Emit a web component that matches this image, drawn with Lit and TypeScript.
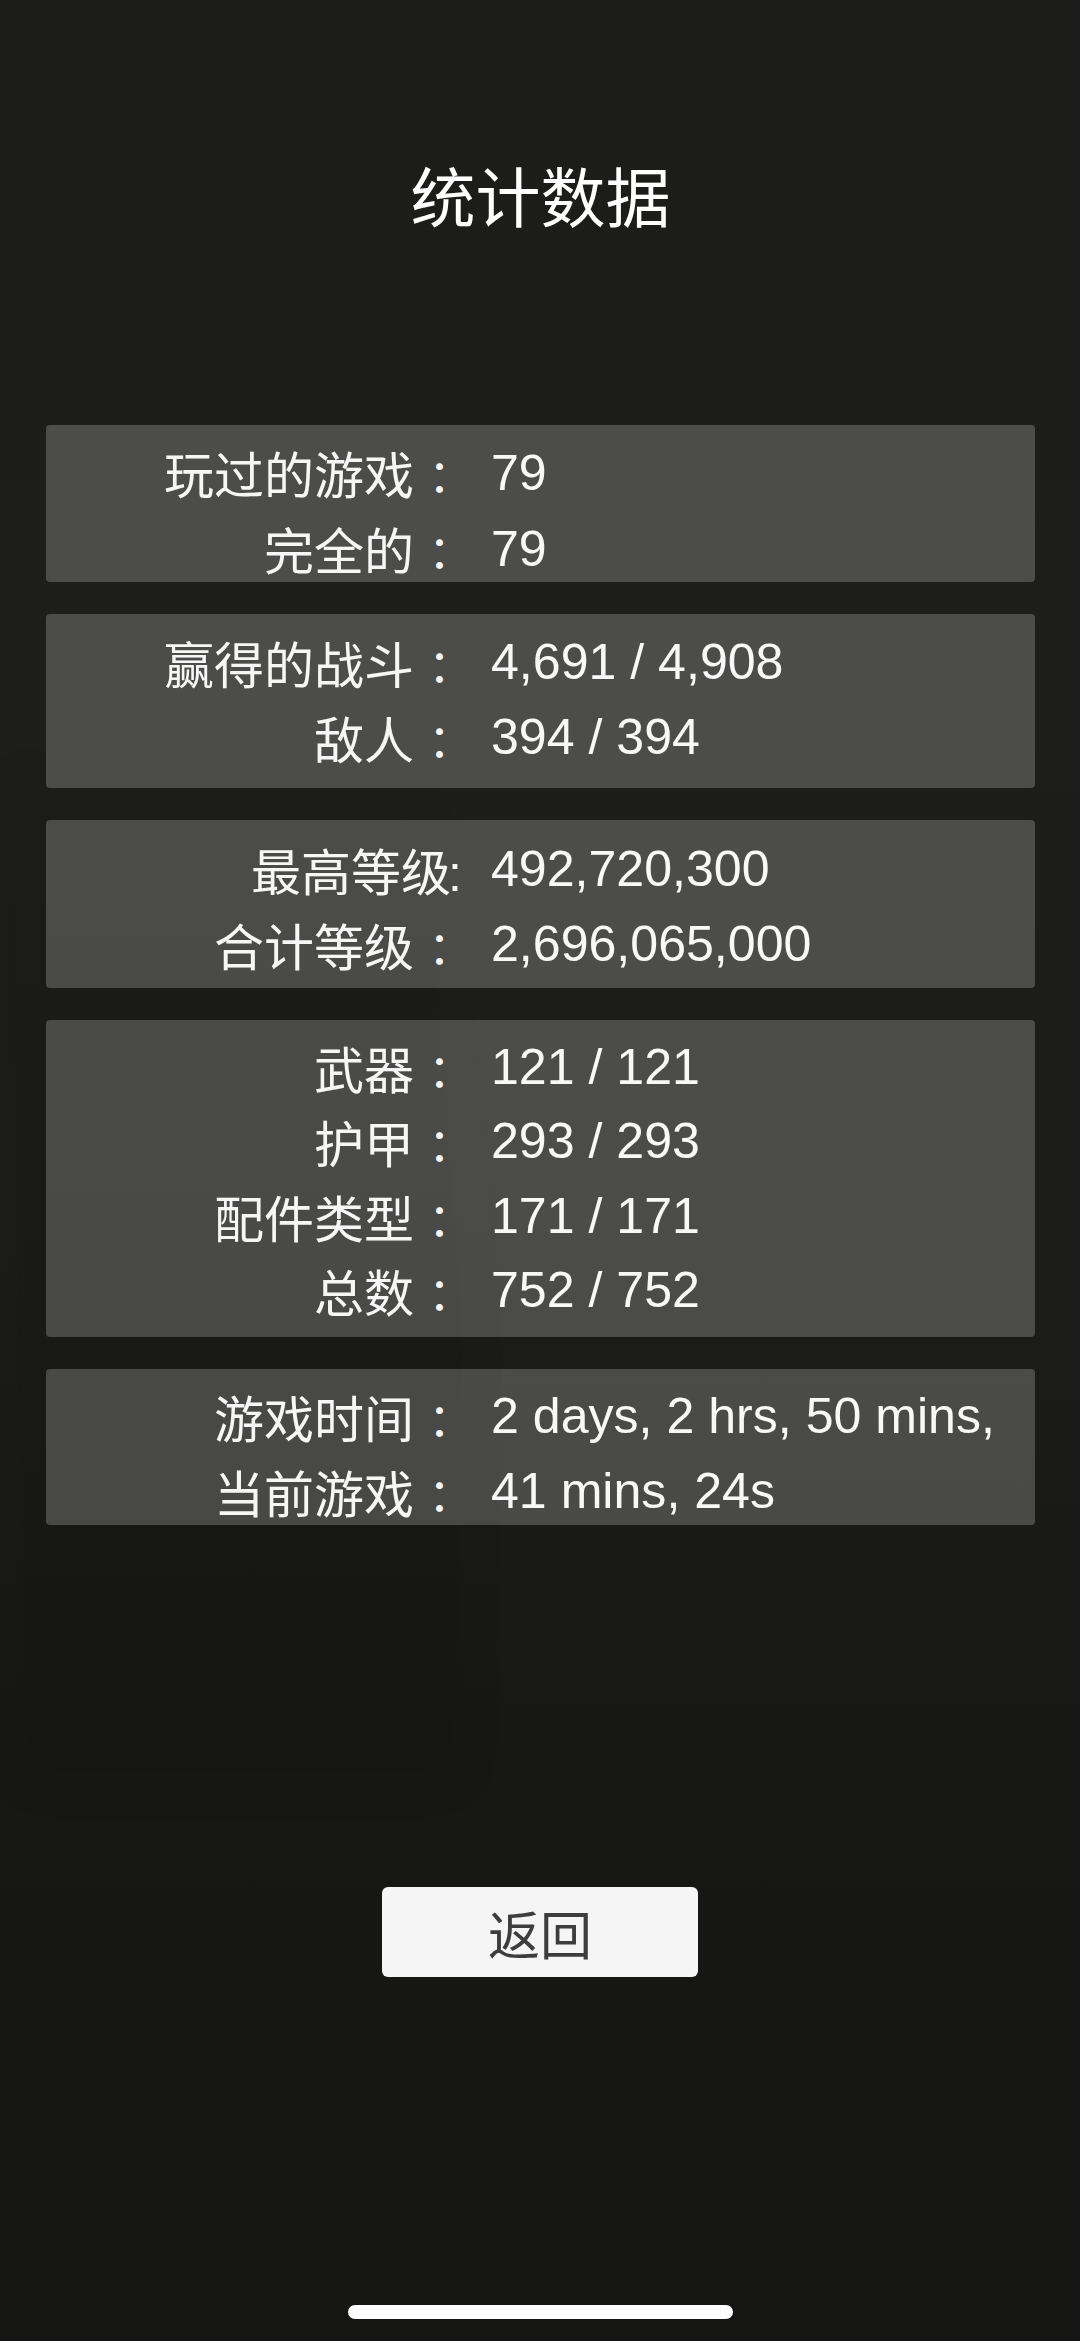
import { LitElement, html, css } from "lit";
import { customElement } from "lit/decorators.js";

type Row = [string, string, string];
const PANELS: { cls: string; rows: Row[] }[] = [
  { cls: "p1", rows: [["玩过的游戏", "：", "79"], ["完全的", "：", "79"]] },
  { cls: "p2", rows: [["赢得的战斗", "：", "4,691 / 4,908"], ["敌人", "：", "394 / 394"]] },
  { cls: "p3", rows: [["最高等级", ":", "492,720,300"], ["合计等级", "：", "2,696,065,000"]] },
  { cls: "p4", rows: [["武器", "：", "121 / 121"], ["护甲", "：", "293 / 293"], ["配件类型", "：", "171 / 171"], ["总数", "：", "752 / 752"]] },
  { cls: "p5", rows: [["游戏时间", "：", "2 days, 2 hrs, 50 mins,"], ["当前游戏", "：", "41 mins, 24s"]] },
];

@customElement("app-root")
export class AppRoot extends LitElement {
  static styles = css`
    :host {
      display: block;
      position: relative;
      width: 1080px;
      height: 2341px;
      overflow: hidden;
      background: linear-gradient(180deg, #1c1c1b 0%, #1d1d1b 30%, #1b1b19 55%, #171716 75%, #151514 100%);
      font-family: "Liberation Sans", "Noto Sans CJK SC", sans-serif;
      color: #fff;
    }
    .bg { position: absolute; inset: 0; width: 1080px; height: 2341px; }
    .page {
      position: relative;
      height: 2341px;
      box-sizing: border-box;
      padding: 0 45px 0 46px;
      display: flex;
      flex-direction: column;
    }
    h1 {
      margin: 0;
      padding-top: 157px;
      height: 425px;
      flex: none;
      box-sizing: border-box;
      font-size: 65px;
      line-height: 74px;
      font-weight: 400;
      text-align: center;
      font-family: "Noto Sans CJK SC", sans-serif;
    }
    .panels { display: flex; flex-direction: column; gap: 32px; flex: none; }
    .panel {
      background: rgba(255, 255, 255, 0.21);
      border-radius: 4px;
      box-sizing: border-box;
    }
    .p1 { height: 157px; padding-top: 14px; }
    .p2 { height: 174px; padding-top: 13.5px; }
    .p3 { height: 168px; padding-top: 15px; }
    .p4 { height: 317px; padding-top: 13px; }
    .p5 { height: 156px; padding-top: 13px; }
    .row {
      display: grid;
      grid-template-columns: 416px 1fr;
      column-gap: 29px;
      height: 75px;
      line-height: 75px;
      font-size: 50px;
      white-space: nowrap;
    }
    .p1 .row { height: 75.5px; }
    .p4 .row { height: 74.4px; line-height: 74.4px; }
    .label { text-align: right; color: #f6f6f6; transform: translateY(2px); }
    .p1 .label { transform: translateY(1px); }
    .value { color: #f8f8f8; font-size: 50.1px; transform: translateY(-3px); }
    .colon {
      display: inline-block;
      box-sizing: border-box;
      width: 48px;
      padding-left: 3px;
      text-align: center;
      font-family: "Noto Sans CJK TC", sans-serif;
      font-size: 45px;
      vertical-align: -1px;
      line-height: 1;
    }
    .half {
      display: inline-block;
      width: 14px;
      margin-left: -3px;
      text-align: left;
      font-family: "Liberation Sans", sans-serif;
    }
    .back {
      align-self: flex-start;
      flex: none;
      margin: 362px 0 0 336px;
      width: 316px;
      height: 90px;
      background: #f5f5f5;
      border-radius: 6px;
      border: 0;
      padding: 0;
      color: #3d3d3d;
      font-family: "Noto Sans CJK SC", sans-serif;
      font-size: 52px;
      line-height: 85px;
      text-align: center;
    }
    .home {
      position: absolute;
      left: 348px;
      top: 2305px;
      width: 385px;
      height: 14px;
      border-radius: 7px;
      background: #fff;
    }
  `;

  render() {
    return html`
      <svg class="bg" viewBox="0 0 1080 2341" aria-hidden="true">
        <defs>
          <filter id="soft" x="-20%" y="-20%" width="140%" height="140%"><feGaussianBlur stdDeviation="30"></feGaussianBlur></filter>
        </defs>
        <g filter="url(#soft)">
          <path d="M0 760 L40 760 L70 800 L440 800 L450 1000 L480 1300 L480 1800 L0 1800 Z" fill="#000" opacity="0.08"></path>
        </g>
      </svg>
      <div class="page">
        <h1>统计数据</h1>
        <div class="panels">
          ${PANELS.map(
            (p) => html`<div class="panel ${p.cls}">
              ${p.rows.map(
                ([l, c, v]) => html`<div class="row">
                  <span class="label">${l}<span class="${c === ":" ? "half" : "colon"}">${c}</span></span>
                  <span class="value">${v}</span>
                </div>`
              )}
            </div>`
          )}
        </div>
        <button class="back">返回</button>
      </div>
      <div class="home"></div>
    `;
  }
}
